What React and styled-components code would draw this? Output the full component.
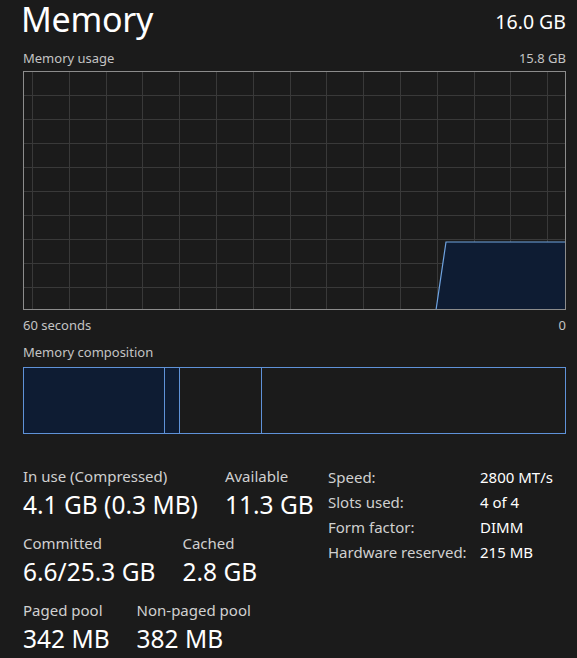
import React from 'react';
import styled, { createGlobalStyle } from 'styled-components';

const GlobalStyle = createGlobalStyle`
  html, body {
    margin: 0;
    padding: 0;
    background: #1b1b1b;
  }
  body {
    font-family: 'Noto Sans', 'Open Sans', sans-serif;
    color: #ffffff;
  }
`;

const Page = styled.div`
  width: 577px;
  box-sizing: border-box;
  padding: 0 11px 0 23px;
`;

const Header = styled.div`
  display: flex;
  justify-content: space-between;
  align-items: flex-start;
  height: 44px;
`;

const Title = styled.h1`
  margin: 0 0 0 -2px;
  font-size: 34px;
  font-weight: 400;
  line-height: 38px;
  letter-spacing: -0.3px;
`;

const Total = styled.div`
  margin-top: 9px;
  font-size: 19.5px;
  line-height: 26px;
`;

const CaptionRow = styled.div`
  display: flex;
  justify-content: space-between;
  font-size: 13px;
  line-height: 18px;
  color: #c4c4c4;
  margin-top: ${p => p.top || 0}px;
  margin-bottom: ${p => p.bottom || 0}px;
`;

const Graph = styled.svg`
  display: block;
`;

const Composition = styled.div`
  display: flex;
  height: 67px;
  border: 1px solid #5f92d8;
  box-sizing: border-box;
`;

const Segment = styled.div`
  background: ${p => (p.filled ? '#0e1c33' : 'transparent')};
  border-right: ${p => (p.last ? 'none' : '1px solid #5f92d8')};
  flex-grow: ${p => (p.last ? 1 : 0)};
  flex-shrink: 0;
`;

const Stats = styled.div`
  display: flex;
  align-items: flex-start;
  margin-top: 32px;
`;

const LeftStats = styled.div`
  display: flex;
  flex-direction: column;
  gap: 9px;
  width: 305px;
`;

const StatRow = styled.div`
  display: flex;
  gap: 27px;
`;

const Stat = styled.div`
  display: flex;
  flex-direction: column;
`;

const StatLabel = styled.div`
  font-size: 15px;
  line-height: 20px;
  color: #d0d0d0;
`;

const StatValue = styled.div`
  font-size: 24.5px;
  line-height: 38px;
  color: #ffffff;
  white-space: nowrap;
`;

const Specs = styled.div`
  display: grid;
  grid-template-columns: 152px auto;
  align-content: start;
  row-gap: 4px;
  margin-top: 1px;
  font-size: 15px;
  line-height: 21px;
`;

const SpecKey = styled.div`
  color: #d0d0d0;
`;

const SpecValue = styled.div`
  color: #ffffff;
`;

const W = 543;
const H = 239;

// Usage history, as [x, y] points relative to the plot area.
const usage = [
  [413, H],
  [423, 171],
  [W, 171],
];

function UsageGraph() {
  const cols = [];
  for (let x = 9; x < W; x += 36.8) cols.push(Math.round(x) + 0.5);
  const rows = [];
  for (let y = 24; y < H; y += 24) rows.push(y + 0.5);
  const line = usage.map(p => p.join(',')).join(' ');
  const area = `${line} ${W},${H}`;
  return (
    <Graph width={W} height={H} viewBox={`0 0 ${W} ${H}`}>
      {cols.map(x => (
        <line key={`c${x}`} x1={x} y1={0} x2={x} y2={H} stroke="#393939" strokeWidth="1" />
      ))}
      {rows.map(y => (
        <line key={`r${y}`} x1={0} y1={y} x2={W} y2={y} stroke="#393939" strokeWidth="1" />
      ))}
      <polygon points={area} fill="#0e1c33" />
      <polyline points={line} fill="none" stroke="#6fa3e0" strokeWidth="1.2" />
      <rect x={0.5} y={0.5} width={W - 1} height={H - 1} fill="none" stroke="#8c8c8c" strokeWidth="1" />
    </Graph>
  );
}

const segments = [
  { width: 140, filled: true },
  { width: 14, filled: true },
  { width: 81, filled: false },
  { last: true },
];

const statRows = [
  [
    { label: 'In use (Compressed)', value: '4.1 GB (0.3 MB)' },
    { label: 'Available', value: '11.3 GB' },
  ],
  [
    { label: 'Committed', value: '6.6/25.3 GB' },
    { label: 'Cached', value: '2.8 GB' },
  ],
  [
    { label: 'Paged pool', value: '342 MB' },
    { label: 'Non-paged pool', value: '382 MB' },
  ],
];

const specs = [
  ['Speed:', '2800 MT/s'],
  ['Slots used:', '4 of 4'],
  ['Form factor:', 'DIMM'],
  ['Hardware reserved:', '215 MB'],
];

export default function App() {
  return (
    <Page>
      <GlobalStyle />
      <Header>
        <Title>Memory</Title>
        <Total>16.0 GB</Total>
      </Header>
      <CaptionRow top={5} bottom={4}>
        <span>Memory usage</span>
        <span>15.8 GB</span>
      </CaptionRow>
      <UsageGraph />
      <CaptionRow top={6}>
        <span>60 seconds</span>
        <span>0</span>
      </CaptionRow>
      <CaptionRow top={9} bottom={6}>
        <span>Memory composition</span>
      </CaptionRow>
      <Composition>
        {segments.map((s, i) => (
          <Segment key={i} filled={s.filled} last={s.last} style={s.width ? { width: s.width } : undefined} />
        ))}
      </Composition>
      <Stats>
        <LeftStats>
          {statRows.map((row, i) => (
            <StatRow key={i}>
              {row.map(stat => (
                <Stat key={stat.label}>
                  <StatLabel>{stat.label}</StatLabel>
                  <StatValue>{stat.value}</StatValue>
                </Stat>
              ))}
            </StatRow>
          ))}
        </LeftStats>
        <Specs>
          {specs.map(([k, v]) => (
            <React.Fragment key={k}>
              <SpecKey>{k}</SpecKey>
              <SpecValue>{v}</SpecValue>
            </React.Fragment>
          ))}
        </Specs>
      </Stats>
    </Page>
  );
}
